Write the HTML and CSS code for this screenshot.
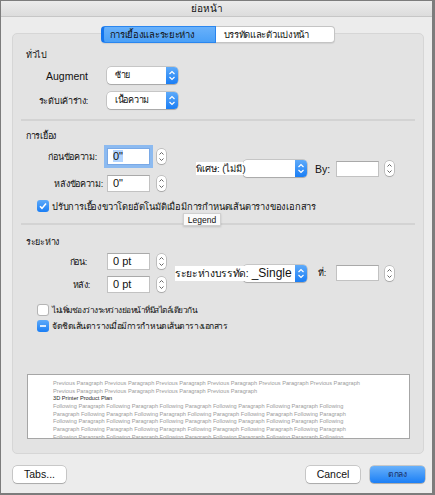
FILE: index.html
```html
<!DOCTYPE html>
<html lang="th">
<head>
    <meta charset="UTF-8">
    <title>ย่อหน้า</title>
    <link rel="stylesheet" href="styles.css">
</head>
<body>
    <div class="window">
        <div class="titlebar">ย่อหน้า</div>
        <div class="content">
            <div class="tabs">
                <div class="tab tab-active">การเยื้องและระยะห่าง</div>
                <div class="tab">บรรทัดและตัวแบ่งหน้า</div>
            </div>

            <div class="panel">
                <div class="section-title">ทั่วไป</div>
                <div class="rows rows-general">
                    <div class="row">
                        <div class="lbl lbl-general en">Augment</div>
                        <div class="popup popup-wide"><span class="popup-text">ซ้าย</span><span class="popup-arrow"><svg viewBox="0 0 12 17" width="12" height="17"><path d="M3.5 7L6 4.5L8.5 7M3.5 10L6 12.5L8.5 10" fill="none" stroke="#fff" stroke-width="1.2"/></svg></span></div>
                    </div>
                    <div class="row">
                        <div class="lbl lbl-general">ระดับเค้าร่าง:</div>
                        <div class="popup popup-wide"><span class="popup-text">เนื้อความ</span><span class="popup-arrow"><svg viewBox="0 0 12 17" width="12" height="17"><path d="M3.5 7L6 4.5L8.5 7M3.5 10L6 12.5L8.5 10" fill="none" stroke="#fff" stroke-width="1.2"/></svg></span></div>
                    </div>
                </div>

                <div class="sep"></div>

                <div class="section-title section-indent">การเยื้อง</div>
                <div class="block block-indent">
                    <div class="rows rows-pair">
                        <div class="row">
                            <div class="lbl lbl-before-text">ก่อนข้อความ:</div>
                            <div class="field field-focus"><span class="selected">0"</span></div>
                            <div class="stepper"><svg viewBox="0 0 9 15" width="9" height="15"><path d="M2.5 5.5L4.5 3.5L6.5 5.5M2.5 9.5L4.5 11.5L6.5 9.5" fill="none" stroke="#666" stroke-width="1"/></svg></div>
                        </div>
                        <div class="row">
                            <div class="lbl lbl-after-text">หลังข้อความ:</div>
                            <div class="field">0"</div>
                            <div class="stepper"><svg viewBox="0 0 9 15" width="9" height="15"><path d="M2.5 5.5L4.5 3.5L6.5 5.5M2.5 9.5L4.5 11.5L6.5 9.5" fill="none" stroke="#666" stroke-width="1"/></svg></div>
                        </div>
                    </div>
                    <div class="row side side-indent">
                        <div class="white-lbl white-lbl-special">พิเศษ: (ไม่มี)</div>
                        <div class="popup"><span class="popup-text"></span><span class="popup-arrow"><svg viewBox="0 0 12 17" width="12" height="17"><path d="M3.5 7L6 4.5L8.5 7M3.5 10L6 12.5L8.5 10" fill="none" stroke="#fff" stroke-width="1.2"/></svg></span></div>
                        <div class="side-lbl side-lbl-by en">By:</div>
                        <div class="field"></div>
                        <div class="stepper"><svg viewBox="0 0 9 15" width="9" height="15"><path d="M2.5 5.5L4.5 3.5L6.5 5.5M2.5 9.5L4.5 11.5L6.5 9.5" fill="none" stroke="#666" stroke-width="1"/></svg></div>
                    </div>
                </div>

                <div class="check-row check-indent">
                    <span class="checkbox checkbox-on"><svg viewBox="0 0 12 12" width="12" height="12"><path d="M3 6.2L5 8.4L9 3.6" fill="none" stroke="#fff" stroke-width="1.6"/></svg></span>
                    <span>ปรับการเยื้องขวาโดยอัตโนมัติเมื่อมีการกำหนดเส้นตารางของเอกสาร</span>
                    <div class="tooltip">Legend</div>
                </div>

                <div class="sep sep-second"></div>

                <div class="section-title section-spacing">ระยะห่าง</div>
                <div class="block block-spacing">
                    <div class="rows rows-pair rows-spacing">
                        <div class="row">
                            <div class="lbl lbl-before">ก่อน:</div>
                            <div class="field">0 pt</div>
                            <div class="stepper"><svg viewBox="0 0 9 15" width="9" height="15"><path d="M2.5 5.5L4.5 3.5L6.5 5.5M2.5 9.5L4.5 11.5L6.5 9.5" fill="none" stroke="#666" stroke-width="1"/></svg></div>
                        </div>
                        <div class="row">
                            <div class="lbl lbl-after">หลัง:</div>
                            <div class="field">0 pt</div>
                            <div class="stepper"><svg viewBox="0 0 9 15" width="9" height="15"><path d="M2.5 5.5L4.5 3.5L6.5 5.5M2.5 9.5L4.5 11.5L6.5 9.5" fill="none" stroke="#666" stroke-width="1"/></svg></div>
                        </div>
                    </div>
                    <div class="row side side-spacing">
                        <div class="white-lbl white-lbl-line"><span class="line-th">ระยะห่างบรรทัด:</span> _Single</div>
                        <div class="popup"><span class="popup-text"></span><span class="popup-arrow"><svg viewBox="0 0 12 17" width="12" height="17"><path d="M3.5 7L6 4.5L8.5 7M3.5 10L6 12.5L8.5 10" fill="none" stroke="#fff" stroke-width="1.2"/></svg></span></div>
                        <div class="side-lbl side-lbl-at">ที่:</div>
                        <div class="field"></div>
                        <div class="stepper"><svg viewBox="0 0 9 15" width="9" height="15"><path d="M2.5 5.5L4.5 3.5L6.5 5.5M2.5 9.5L4.5 11.5L6.5 9.5" fill="none" stroke="#666" stroke-width="1"/></svg></div>
                    </div>
                </div>

                <div class="check-row check-first">
                    <span class="checkbox"></span>
                    <span>ไม่เพิ่มช่องว่างระหว่างย่อหน้าที่มีสไตล์เดียวกัน</span>
                </div>
                <div class="check-row check-second">
                    <span class="checkbox checkbox-on"><svg viewBox="0 0 12 12" width="12" height="12"><path d="M3 6H9" fill="none" stroke="#fff" stroke-width="1.6"/></svg></span>
                    <span>จัดชิดเส้นตารางเมื่อมีการกำหนดเส้นตารางเอกสาร</span>
                </div>

                <div class="preview">
                    <div class="pv-line">Previous Paragraph Previous Paragraph Previous Paragraph Previous Paragraph Previous Paragraph Previous Paragraph</div>
                    <div class="pv-line">Previous Paragraph Previous Paragraph Previous Paragraph Previous Paragraph</div>
                    <div class="pv-line pv-current">3D Printer Product Plan</div>
                    <div class="pv-line">Following Paragraph Following Paragraph Following Paragraph Following Paragraph Following Paragraph Following</div>
                    <div class="pv-line">Paragraph Following Paragraph Following Paragraph Following Paragraph Following Paragraph Following Paragraph</div>
                    <div class="pv-line">Following Paragraph Following Paragraph Following Paragraph Following Paragraph Following Paragraph Following</div>
                    <div class="pv-line">Paragraph Following Paragraph Following Paragraph Following Paragraph Following Paragraph Following Paragraph</div>
                    <div class="pv-line">Following Paragraph Following Paragraph Following Paragraph Following Paragraph Following Paragraph Following</div>
                </div>
            </div>

            <div class="buttons">
                <div class="button en">Tabs...</div>
                <div class="button button-cancel en">Cancel</div>
                <div class="button button-ok">ตกลง</div>
            </div>
        </div>
    </div>
</body>
</html>
```

FILE: styles.css
```css
* {
    box-sizing: border-box;
}

body {
    margin: 0;
    font-family: "Liberation Sans", "DejaVu Sans", sans-serif;
    font-size: 9px;
    letter-spacing: -0.3px;
    color: #111;
    background: #ececec;
}

.en {
    font-size: 10.5px;
    letter-spacing: 0;
}

.window {
    width: 435px;
    height: 495px;
    border: 1px solid #7c7c7c;
    border-right-width: 3px;
    border-bottom-width: 2px;
    background: #ececec;
    overflow: hidden;
}

.titlebar {
    height: 16px;
    line-height: 15px;
    text-align: center;
    font-size: 10px;
    letter-spacing: 0;
    padding-right: 20px;
    background: linear-gradient(#ebebeb, #dcdcdc);
    border-bottom: 1px solid #c6c6c6;
}

.content {
    padding: 9px 8px 0 11px;
}

/* segmented tabs */
.tabs {
    display: flex;
    justify-content: center;
    position: relative;
    z-index: 1;
    height: 17px;
    margin-bottom: -10px;
    padding-right: 1px;
}

.tab {
    width: 119px;
    height: 17px;
    line-height: 16px;
    padding-left: 8px;
    font-size: 9.5px;
    background: #fff;
    border: 1px solid #c4c4c4;
    border-left: none;
    border-radius: 0 4px 4px 0;
    box-shadow: 0 1px 1px rgba(0, 0, 0, 0.08);
}

.tab-active {
    width: 115px;
    background: linear-gradient(#69b1fa, #4aa0f7);
    border: 1px solid #2a86ef;
    border-left: 3px solid #1475ee;
    border-radius: 4px 0 0 4px;
    padding-left: 6px;
}

/* group panel */
.panel {
    height: 421px;
    background: #e3e3e3;
    border: 1px solid #d6d6d6;
    border-radius: 5px;
    padding-top: 14px;
}

.section-title {
    height: 14px;
    line-height: 14px;
    margin-left: 13px;
}

.section-indent {
    margin-top: 8px;
}

.section-spacing {
    margin-top: 10px;
}

.rows {
    display: flex;
    flex-direction: column;
}

.rows-general {
    margin-top: 5px;
    gap: 8px;
}

.rows-pair {
    gap: 10px;
}

.rows-spacing {
    gap: 6px;
}

.row {
    display: flex;
    align-items: center;
    height: 17px;
}

.lbl {
    width: 94px;
    text-align: right;
    white-space: nowrap;
}

.lbl-general {
    padding-right: 19px;
}

.lbl-before-text {
    padding-right: 10px;
}

.lbl-after-text {
    padding-right: 4px;
}

.lbl-before {
    padding-right: 20px;
}

.lbl-after {
    padding-right: 17px;
}

.sep {
    height: 2px;
    background: #d3d3d3;
    margin: 10px 8px 0 8px;
}

.sep-second {
    margin-top: 11px;
}

.block {
    display: flex;
}

.block-indent {
    margin-top: 5px;
}

.block-spacing {
    margin-top: 4px;
    align-items: center;
}

.side-indent {
    margin-top: 12px;
    margin-left: 30px;
}

.side-spacing {
    margin-left: 9px;
}

/* controls */
.popup {
    display: flex;
    width: 64px;
    height: 17px;
    background: #fff;
    border-radius: 4px;
    box-shadow: 0 0 0 0.5px rgba(0, 0, 0, 0.25), 0 1px 1px rgba(0, 0, 0, 0.15);
}

.popup-wide {
    width: 71px;
}

.popup-text {
    flex: 1;
    padding-left: 8px;
    line-height: 17px;
}

.popup-arrow {
    width: 12px;
    height: 17px;
    border-radius: 0 4px 4px 0;
    background: linear-gradient(#5eaaf9, #1a7ef5);
}

.popup-arrow svg {
    display: block;
}

.field {
    width: 43px;
    height: 17px;
    line-height: 15px;
    padding-left: 5px;
    background: #fff;
    border: 1px solid #c2c2c2;
    border-top-color: #a9a9a9;
    font-size: 11px;
    letter-spacing: 0;
}

.field-focus {
    box-shadow: 0 0 0 3px #8cbaf0;
    border-color: #7aa9e6;
}

.selected {
    background: #b4d5fe;
}

.stepper {
    width: 9px;
    height: 15px;
    margin-left: 7px;
    background: #fff;
    border-radius: 4px;
    box-shadow: 0 0 0 0.5px rgba(0, 0, 0, 0.3), 0 1px 1px rgba(0, 0, 0, 0.12);
}

.stepper svg {
    display: block;
}

.white-lbl {
    position: relative;
    z-index: 1;
    background: #fff;
    white-space: nowrap;
}

.white-lbl-special {
    width: 47px;
    height: 13px;
    line-height: 13px;
    font-size: 9.5px;
    letter-spacing: 0;
}

.white-lbl-line {
    width: 103px;
    height: 15px;
    line-height: 15px;
    font-size: 12px;
    letter-spacing: 0;
    margin-right: -35px;
}

.line-th {
    font-size: 10.3px;
    letter-spacing: -0.35px;
}

.side-lbl {
    white-space: nowrap;
}

.side-lbl-by {
    width: 21px;
    margin-left: 8px;
}

.side-lbl-at {
    width: 18px;
    margin-left: 11px;
}

.side .field {
    height: 16px;
}

.side .stepper {
    margin-left: 6px;
}

/* checkboxes */
.check-row {
    position: relative;
    display: flex;
    align-items: center;
    gap: 3px;
    height: 12px;
    margin-left: 24px;
    white-space: nowrap;
}

.check-indent {
    margin-top: 8px;
    font-size: 9.3px;
    letter-spacing: -0.2px;
}

.check-first {
    margin-top: 11px;
    font-size: 8.3px;
    letter-spacing: -0.5px;
}

.check-second {
    margin-top: 4px;
    font-size: 8.5px;
    letter-spacing: -0.45px;
}

.checkbox {
    width: 12px;
    height: 12px;
    flex: none;
    background: #fff;
    border-radius: 3px;
    box-shadow: inset 0 0 0 1px #b5b5b5;
}

.checkbox-on {
    background: linear-gradient(#5eaaf9, #1a7ef5);
    box-shadow: none;
}

.checkbox svg {
    display: block;
}

.tooltip {
    position: absolute;
    left: 146px;
    top: 13px;
    width: 38px;
    height: 13px;
    line-height: 12px;
    text-align: center;
    font-size: 8.5px;
    letter-spacing: 0;
    background: #fafafa;
    border: 1px solid #d0d0d0;
    box-shadow: 0 1px 2px rgba(0, 0, 0, 0.15);
    z-index: 2;
}

/* preview */
.preview {
    width: 383px;
    height: 65px;
    margin: 42px 0 0 14px;
    padding: 5px 0 0 25px;
    background: #fff;
    border: 1px solid #a6a6a6;
    overflow: hidden;
    font-size: 5.65px;
    letter-spacing: 0;
    color: #9c9c9c;
}

.pv-line {
    height: 7.7px;
    line-height: 7.7px;
    white-space: nowrap;
}

.pv-current {
    color: #1e1e1e;
}

/* bottom buttons */
.buttons {
    display: flex;
    margin-top: 12px;
    padding-left: 1px;
    gap: 10px;
}

.button {
    width: 53px;
    height: 17px;
    line-height: 16px;
    text-align: center;
    background: #fff;
    border-radius: 4px;
    box-shadow: 0 0 0 0.5px rgba(0, 0, 0, 0.3), 0 1px 1px rgba(0, 0, 0, 0.15);
}

.button-cancel {
    width: 54px;
    margin-left: auto;
}

.button-ok {
    width: 55px;
    margin-right: -1px;
    font-size: 8.5px;
    color: #1b2f66;
    background: linear-gradient(#69b1fa, #1b7ff6);
}
```
